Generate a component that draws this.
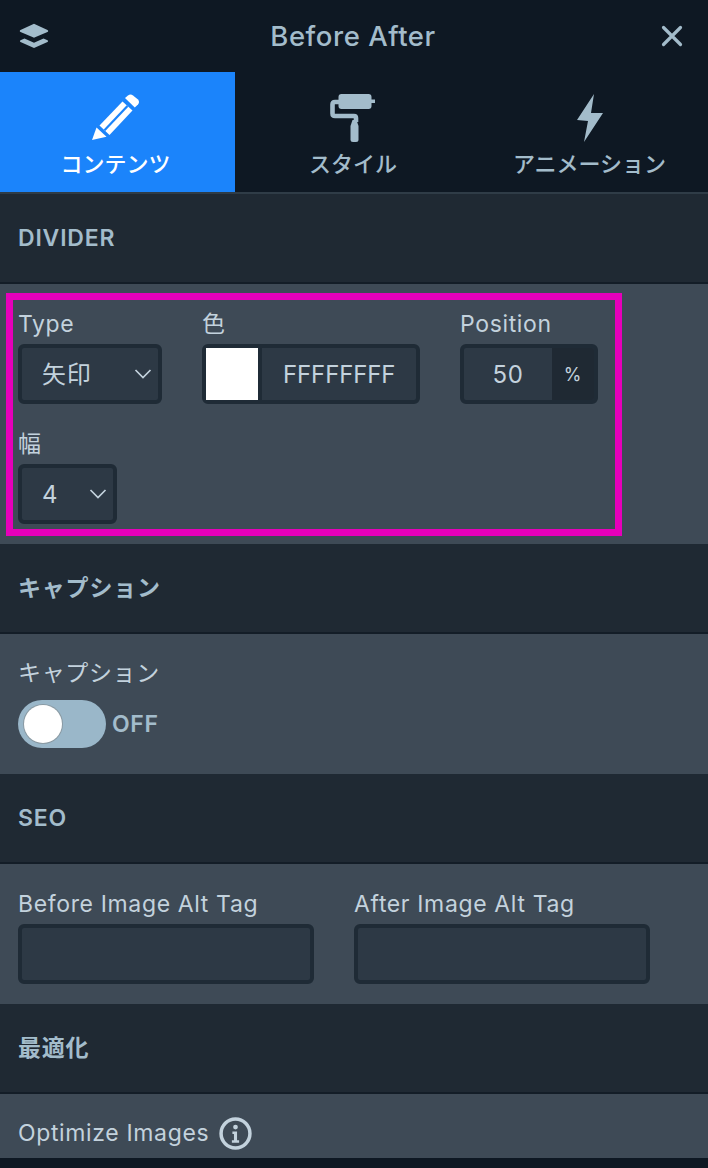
<div class="panel">
  <header class="top">
    <svg class="layers" viewBox="0 0 32 26" width="32" height="26"><path d="M16 2 29 8 16 13.500 3 8Z" fill="#a3bccb" stroke="#a3bccb" stroke-width="2.400" stroke-linejoin="round"/><path d="M6.500 15.500 2.500 17.300c-.8.4-.8 1.300 0 1.700L16 25 29.500 19c.8-.4.8-1.300 0-1.700L25.500 15.500 16 19.800Z" fill="#a3bccb"/></svg>
    <h1>Before After</h1>
    <svg class="close" viewBox="0 0 24 24" width="24" height="24"><path d="M3.500 3.500 20.500 20.500M20.500 3.500 3.500 20.500" stroke="#a3bccb" stroke-width="3.200" stroke-linecap="round"/></svg>
  </header>

  <nav class="tabs">
    <div class="tab active">
      <svg viewBox="0 0 48 48" width="48" height="48"><path d="M33 4 36 1.500Q38.500-.5 41 1.500L46 5.500Q48 8 46 10.500L42.800 13.500Z" fill="#fff"/><path d="M30.500 7.500 40.500 16.500 17.500 41 7.500 31.500Z" fill="#fff"/><path d="M35.500 12 12.500 36.200" stroke="#1b84fb" stroke-width="2.200"/><path d="M0 46 4.500 33.500 14.500 42.800Z" fill="#fff"/></svg>
      <span>コンテンツ</span>
    </div>
    <div class="tab">
      <svg viewBox="0 0 48 48" width="48" height="48"><rect x="9.500" y="0" width="33" height="15" rx="3" fill="#a3bccb"/><rect x="42" y="5.500" width="4" height="3.500" fill="#a3bccb"/><path d="M10 8H6Q3.500 8 3.500 10.500V19.500Q3.500 22 6 22H25Q27 22 27 24V28" fill="none" stroke="#a3bccb" stroke-width="4.600"/><path d="M23.500 26h4l2 6V45.500q0 2.500-2.500 2.500h-3q-2.500 0-2.500-2.500V32Z" fill="#a3bccb"/></svg>
      <span>スタイル</span>
    </div>
    <div class="tab">
      <svg viewBox="0 0 48 48" width="48" height="48"><path d="M28 0 11 26 22 27 18 48 37 19 25 19Z" fill="#a3bccb"/></svg>
      <span>アニメーション</span>
    </div>
  </nav>

  <div class="head">DIVIDER</div>
  <section class="body divider">
    <div class="row">
      <div class="field f-type">
        <div class="label">Type</div>
        <div class="control select">
          <span class="cjk">矢印</span>
          <svg viewBox="0 0 18 10" width="18" height="10"><path d="M1.500 1 9 8.500 16.500 1" fill="none" stroke="#c3d2dd" stroke-width="1.700"/></svg>
        </div>
      </div>
      <div class="field f-color">
        <div class="label">色</div>
        <div class="control color">
          <i class="swatch"></i>
          <span>FFFFFFFF</span>
        </div>
      </div>
      <div class="field f-pos">
        <div class="label">Position</div>
        <div class="control number">
          <span class="num">50</span>
          <span class="unit">%</span>
        </div>
      </div>
    </div>
    <div class="row second">
      <div class="field f-width">
        <div class="label">幅</div>
        <div class="control select">
          <span>4</span>
          <svg viewBox="0 0 18 10" width="18" height="10"><path d="M1.500 1 9 8.500 16.500 1" fill="none" stroke="#c3d2dd" stroke-width="1.700"/></svg>
        </div>
      </div>
    </div>
    <div class="highlight"></div>
  </section>

  <div class="head">キャプション</div>
  <section class="body caption">
    <div class="label">キャプション</div>
    <div class="toggle-row">
      <div class="toggle"><i></i></div>
      <span>OFF</span>
    </div>
  </section>

  <div class="head">SEO</div>
  <section class="body seo">
    <div class="field f-alt">
      <div class="label">Before Image Alt Tag</div>
      <div class="control"></div>
    </div>
    <div class="field f-alt">
      <div class="label">After Image Alt Tag</div>
      <div class="control"></div>
    </div>
  </section>

  <div class="head">最適化</div>
  <section class="body optimize">
    <div class="label">Optimize Images</div>
    <svg viewBox="0 0 32 32" width="33" height="33"><circle cx="16" cy="16" r="14" fill="none" stroke="#c3d2dd" stroke-width="3.400"/><circle cx="16" cy="9.800" r="2.300" fill="#c3d2dd"/><path d="M13 14h4.500v8.500H19.500V25h-7v-2.500h2V16.500H13Z" fill="#c3d2dd"/></svg>
  </section>
</div>

<style>
  :global(body) { margin: 0; background: #0e1823; }
  .panel {
    width: 708px; height: 1168px; overflow: hidden; background: #0e1823;
    font-family: Inter, "Noto Sans CJK JP", sans-serif; letter-spacing: .04em;
  }
  .top { height: 72px; display: flex; align-items: center; justify-content: space-between; padding: 0 24px 0 18px; box-sizing: border-box; }
  .top h1 { margin: 0 4px 0 0; font-size: 27.5px; font-weight: 500; color: #a3bccb; line-height: 72px; letter-spacing: .02em; }
  .tabs { display: flex; height: 120px; border-bottom: 2px solid #2f3c47; }
  .tab { flex: 1 1 0; display: flex; flex-direction: column; align-items: center; padding-top: 22px; box-sizing: border-box; color: #a3bccb; font-size: 22px; font-weight: 500; font-family: "Noto Sans CJK JP", sans-serif; letter-spacing: 0; }
  .tab span { margin-top: 4px; line-height: 32px; }
  .tab.active { background: #1b84fb; color: #fff; flex: 0 0 235px; }
  .tab.active span { margin-right: 4px; }
  .tab.active svg { margin-right: 3px; }
  .tab:nth-child(2) { flex: 0 0 236px; }
  .head { height: 88px; background: #1f2933; color: #a3bccb; font-size: 23px; font-weight: 600; line-height: 88px; padding-left: 18px; border-bottom: 2px solid #131d27; letter-spacing: .035em; }
  .body { background: #3e4a56; box-sizing: border-box; color: #c3d2dd; }
  .label { font-size: 23px; line-height: 30px; color: #c3d2dd; }
  .divider { height: 260px; position: relative; padding: 25px 18px 0; }
  .row { display: flex; }
  .row.second { margin-top: 25px; }
  .control { height: 60px; box-sizing: border-box; border: 4px solid #1f2b36; border-radius: 6px; background: #2d3945; font-size: 24px; color: #c3d2dd; margin-top: 5px; display: flex; align-items: center; }
  .f-type { width: 184px; }
  .f-type .control { width: 144px; }
  .select { justify-content: space-between; padding: 0 6px 0 20px; }
  .select .cjk { padding-bottom: 4px; }
  .f-color { width: 258px; }
  .f-color .control { width: 218px; }
  .swatch { width: 52px; height: 52px; background: #fff; flex: none; border-right: 4px solid #1f2b36; }
  .color span { margin-left: 21px; letter-spacing: -.005em; }
  .f-pos .control { width: 138px; justify-content: space-between; overflow: hidden; }
  .num { flex: 1; text-align: center; }
  .unit { width: 42px; height: 100%; background: #1f2933; display: flex; align-items: center; justify-content: center; font-size: 18px; }
  .f-width .control { width: 99px; }
  .highlight { position: absolute; left: 6px; top: 9px; width: 616px; height: 243px; box-sizing: border-box; border: 7px solid #e600ba; }
  .caption { height: 140px; padding: 24px 18px 0; }
  .toggle-row { display: flex; align-items: center; margin-top: 12px; gap: 6px; color: #a3bccb; font-size: 23px; font-weight: 600; }
  .toggle { width: 88px; height: 48px; border-radius: 24px; background: #9ab7c9; padding: 5px 0 0 6px; box-sizing: border-box; }
  .toggle i { display: block; width: 38px; height: 38px; border-radius: 50%; background: #fff; box-shadow: 0 0 0 1px #8a9aa3; }
  .seo { height: 140px; display: flex; gap: 40px; padding: 25px 18px 0; }
  .f-alt { width: 296px; }
  .optimize { height: 64px; display: flex; align-items: flex-start; gap: 10px; padding: 24px 18px 0; }
  .optimize svg { margin-top: -1px; flex: none; }
</style>
